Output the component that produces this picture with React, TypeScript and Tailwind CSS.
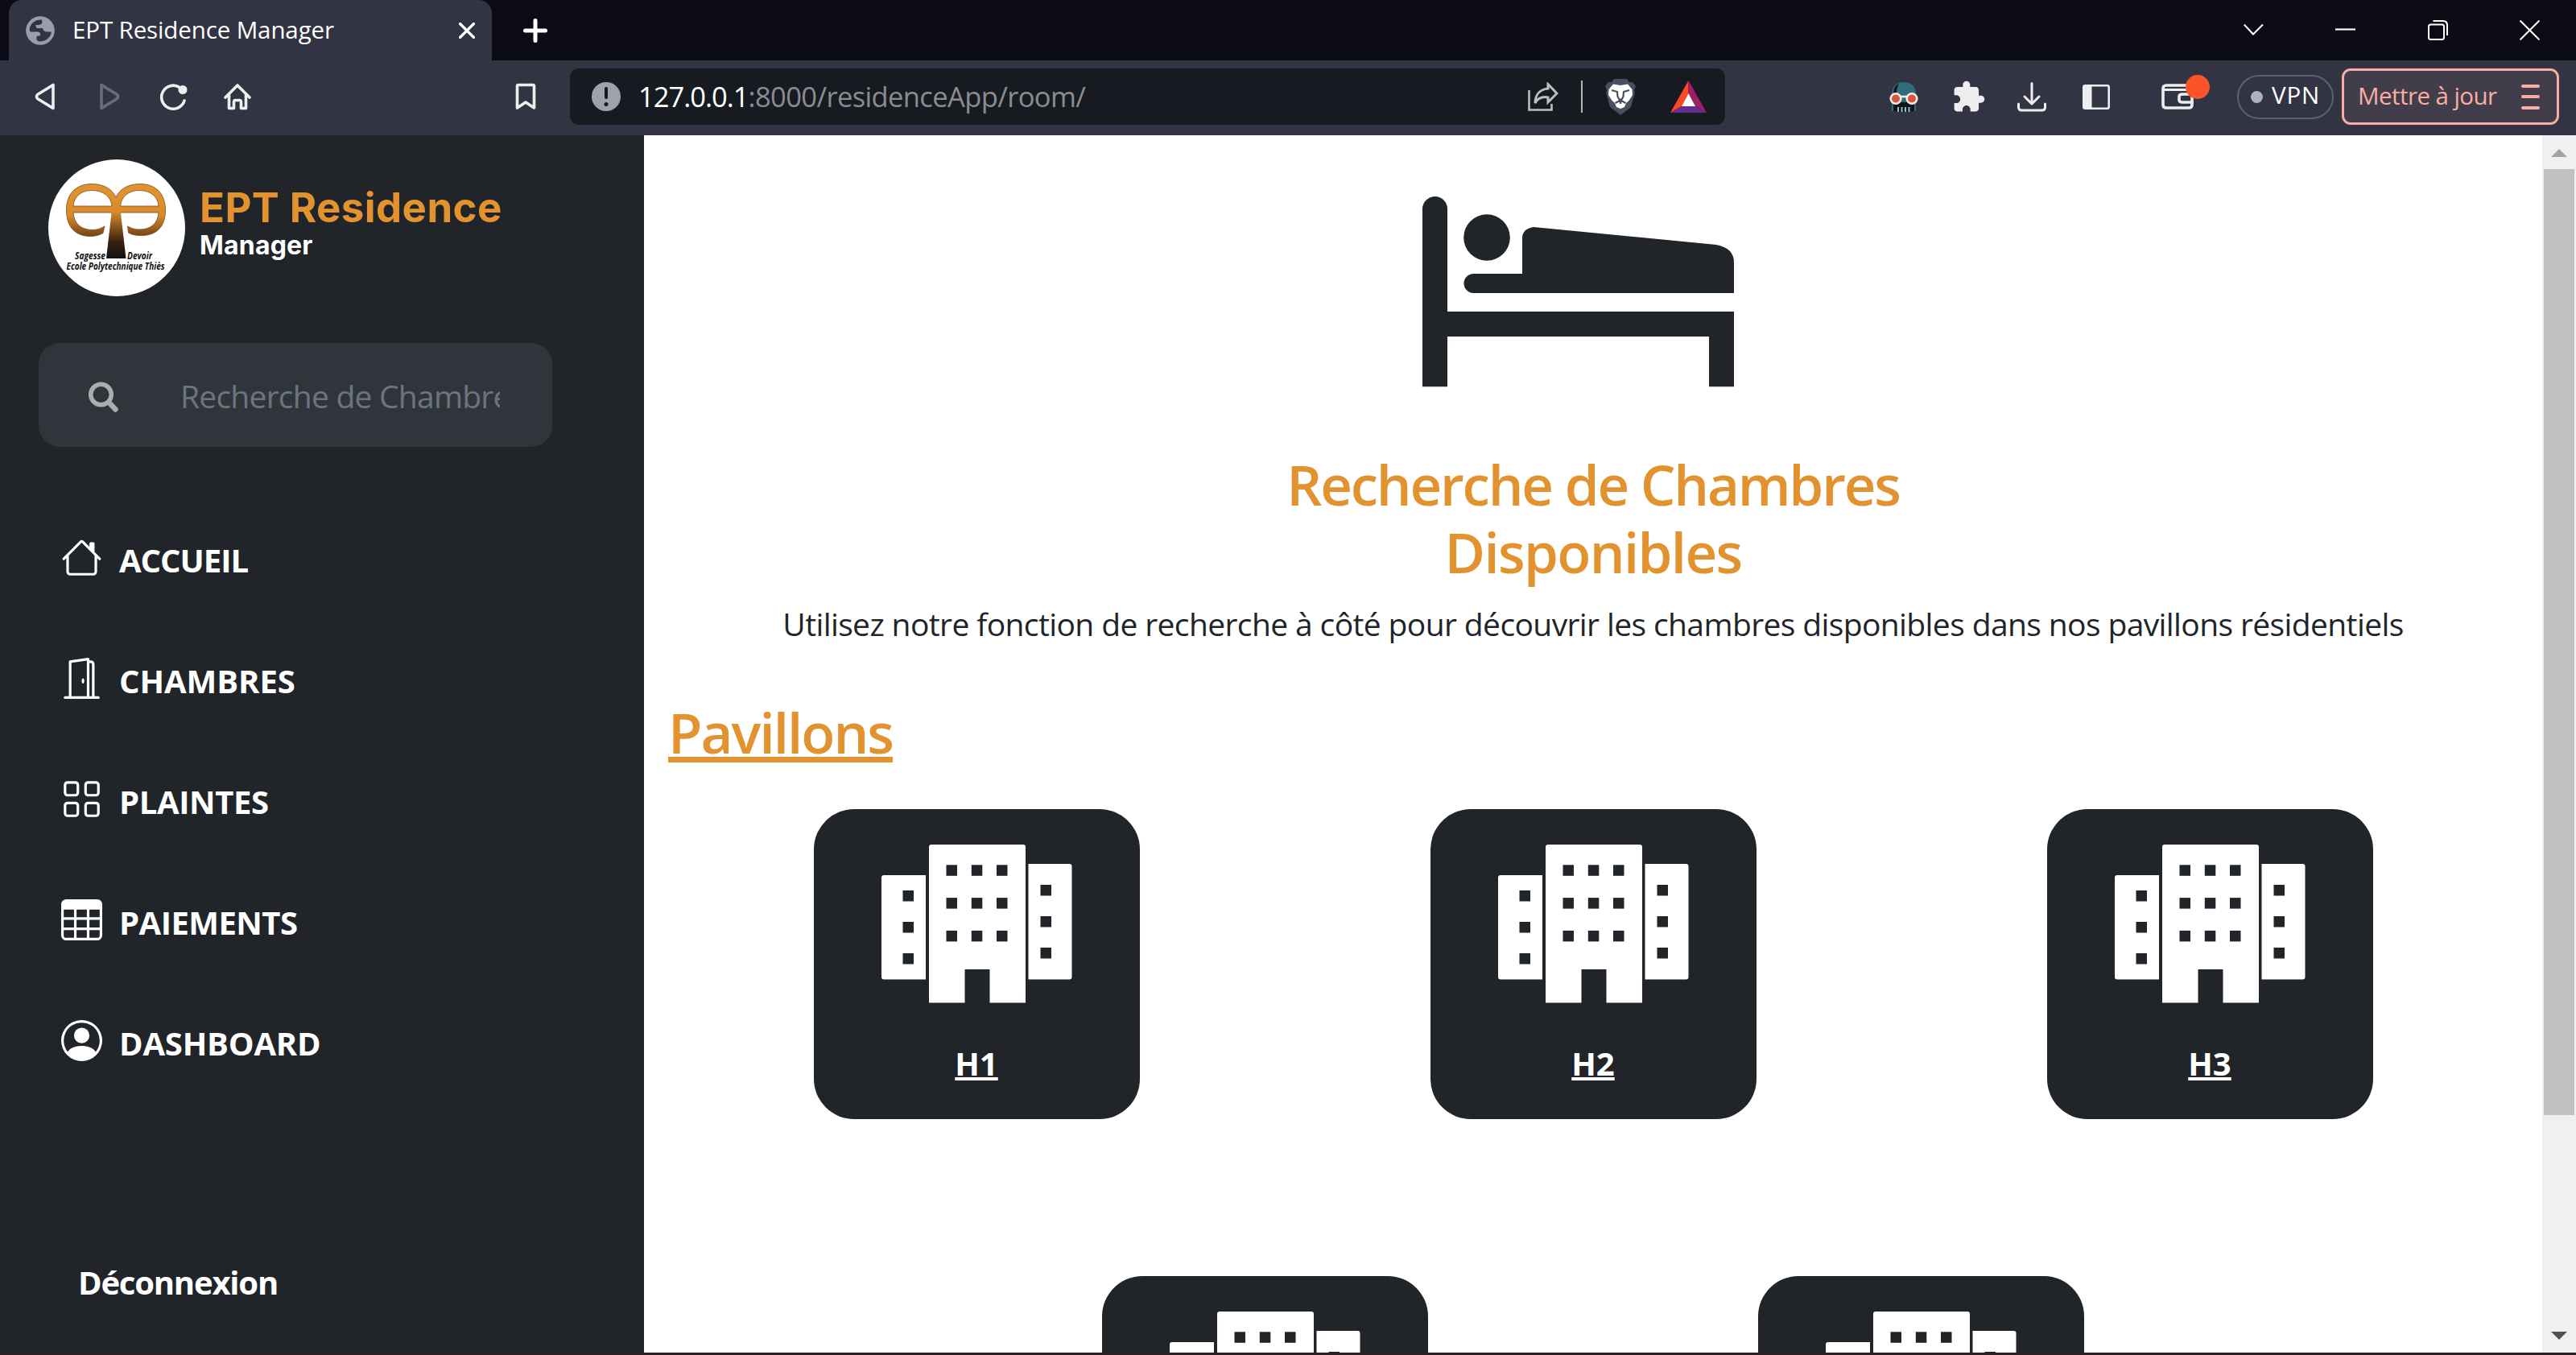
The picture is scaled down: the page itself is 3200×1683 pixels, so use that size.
import React from "react";
import { BsHouse, BsDoorOpen, BsGrid, BsTable, BsPersonCircle } from "react-icons/bs";
import { MdExtension } from "react-icons/md";

const navItems = [
  { label: "ACCUEIL", Icon: BsHouse, spacing: "tracking-[-1px]" },
  { label: "CHAMBRES", Icon: BsDoorOpen, spacing: "tracking-[-0.05px]" },
  { label: "PLAINTES", Icon: BsGrid, spacing: "tracking-[-0.38px]" },
  { label: "PAIEMENTS", Icon: BsTable, spacing: "tracking-[-0.52px]" },
  { label: "DASHBOARD", Icon: BsPersonCircle, spacing: "tracking-[-0.19px]" },
];

function GlobeIcon() {
  return (
    <svg viewBox="0 0 36 36" className="size-9 shrink-0">
      <circle cx="18" cy="18" r="17.8" fill="#9b9ea8" />
      <path d="M20 4.500C12 4 5.500 9 4.500 16.500L5.500 19.500H14.500C18 19.500 18.500 22 18 24.500H15C14 24.500 13.500 25 13.500 26V29.500C15 31.200 17 31.800 19 31.500C26 31 31.500 25.500 31.800 19.500H27C23 19.500 21.500 17.500 21 15H13.500V13.500H12.500V11H15.500C18.500 11 20.500 9.500 20.500 7.500Z" fill="#323443" />
      <path d="M18 20L21 20.500C22 23 20.500 26 18 26Z" fill="#323443" />
    </svg>
  );
}

function TabBar() {
  return (
    <div className="flex h-[75px] items-center bg-[#0b0b15] pl-[11px]">
      <div className="flex h-full w-[600px] items-center rounded-t-[16px] bg-[#323443] pl-[21px] pr-[21px]">
        <GlobeIcon />
        <span className="ml-[22px] flex-1 pb-0.5 text-[29.5px] leading-none tracking-[-0.12px] text-white">EPT Residence Manager</span>
        <svg viewBox="0 0 20 20" className="size-5" stroke="#fff" strokeWidth="3.2" strokeLinecap="round">
          <path d="M1.500 1.500L18.500 18.500M18.500 1.500L1.500 18.500" />
        </svg>
      </div>
      <svg viewBox="0 0 30 30" className="ml-[39px] size-[30px]" stroke="#fff" strokeWidth="5" strokeLinecap="round">
        <path d="M15 2.500V27.500M2.500 15H27.500" />
      </svg>
      <div className="ml-auto mr-[45px] flex items-center gap-[89.5px]">
        <svg viewBox="0 0 25 25" className="size-[25px]" fill="none" stroke="#fff" strokeWidth="2">
          <path d="M0.700 5.500L12 17.500L24 5.500" />
        </svg>
        <svg viewBox="0 0 25 25" className="size-[25px]" stroke="#fff" strokeWidth="2.200">
          <path d="M0 11.500H25" />
        </svg>
        <svg viewBox="0 0 25 25" className="size-[25px]" fill="none" stroke="#fff" strokeWidth="2">
          <rect x="1" y="5.500" width="19" height="18.500" rx="2.500" />
          <path d="M6.500 1.100H18.500C22 1.100 24 3 24 6.500V19" />
        </svg>
        <svg viewBox="0 0 25 25" className="size-[25px]" stroke="#fff" strokeWidth="2">
          <path d="M0.500 0.500L24.500 24.500M24.500 0.500L0.500 24.500" />
        </svg>
      </div>
    </div>
  );
}

function Toolbar() {
  return (
    <div className="flex h-[93px] items-center bg-[#323443] pb-[3px] pl-[43px]">
      <svg viewBox="0 0 26 34" className="h-[34px] w-[26px]" fill="none" stroke="#eeeeef" strokeWidth="3.600" strokeLinejoin="round">
        <path d="M23 2.500V31.500L3.500 19.500Q1.500 17 3.500 14.500Z" />
      </svg>
      <svg viewBox="0 0 26 34" className="ml-[54px] h-[34px] w-[26px]" fill="none" stroke="#6b6d79" strokeWidth="3.600" strokeLinejoin="round">
        <path d="M3 2.500V31.500L22.500 19.500Q24.500 17 22.500 14.500Z" />
      </svg>
      <svg viewBox="0 0 36 34" className="ml-[49px] h-[34px] w-9" fill="none" stroke="#eeeeef" strokeWidth="3.600" strokeLinecap="round">
        <path d="M25 5.500A14.500 14.500 0 1 0 31 22" />
        <circle cx="29" cy="8.500" r="5.500" fill="#eeeeef" stroke="none" />
      </svg>
      <svg viewBox="0 0 34 34" className="ml-[44px] size-[34px]" fill="none" stroke="#eeeeef" strokeWidth="3.600" strokeLinejoin="round" strokeLinecap="round">
        <path d="M2 18L17 3L32 18M6.500 15V31.500H12.500V24Q12.500 21.500 14.500 21.500H19.500Q21.500 21.500 21.500 24V31.500H27.500V15" />
      </svg>
      <svg viewBox="0 0 26 34" className="ml-[328px] h-[34px] w-[26px]" fill="none" stroke="#eeeeef" strokeWidth="3.600" strokeLinejoin="round">
        <path d="M2.500 4Q2.500 2.500 4 2.500H22Q23.500 2.500 23.500 4V31L13 24L2.500 31Z" />
      </svg>

      <div className="ml-[42px] flex h-[70px] w-[1435px] items-center rounded-[11px] bg-[#181a21] pl-[27px] pr-[23px]">
        <svg viewBox="0 0 36 36" className="size-9">
          <circle cx="18" cy="18" r="18" fill="#9fa2ac" />
          <path d="M18 8V19" stroke="#181a21" strokeWidth="4" strokeLinecap="round" />
          <circle cx="18" cy="27.500" r="2.500" fill="#181a21" />
        </svg>
        <div className="ml-[22px] flex-1 text-[34.5px] leading-none">
          <span className="tracking-[-1px] text-white">127.0.0.1</span>
          <span className="tracking-[-0.62px] text-[#8b8c90]">:8000/residenceApp/room/</span>
        </div>
        <svg viewBox="0 0 38 36" className="h-9 w-[38px]" fill="none" stroke="#bdbebf" strokeWidth="2.600">
          <path d="M1.500 10V34.500H29.500V27" />
          <path d="M25 2.500L36 14L25 25V19C17 17.500 12 20.500 9 26C9 15.500 15 9 25 8Z" strokeWidth="3" />
        </svg>
        <div className="ml-[28px] h-10 w-0.5 bg-[#b5b6b8]" />
        <svg viewBox="0 0 38 46" className="ml-[28px] h-[46px] w-[38px]">
          <path d="M11 1H27L30 5H34L38 10L36 15L37 18L32 36L19 46L6 36L1 18L2 15L0 10L4 5H8Z" fill="#4b4d60" />
          <path d="M10 7.500L19 9L28 7.500L33.500 14L34 21L29.500 28L26 31L24 36L19 38L14 36L12 31L8.500 28L4 21L4.500 14Z" fill="#fff" />
          <path d="M8 15L15 17L15.500 23L17.500 26.500H20.500L22.500 23L23 17L30 15M12.500 31L19 27.500L25.500 31M19 28V32" fill="none" stroke="#4b4d60" strokeWidth="2.200" />
        </svg>
        <svg viewBox="0 0 45 40" className="ml-[43px] h-10 w-[45px]">
          <path d="M22.500 0L0 40L14 32L22.500 16Z" fill="#ff4724" />
          <path d="M22.500 0V16L31 32L45 40Z" fill="#9e1f63" />
          <path d="M0 40L14 32H31L45 40Z" fill="#662d91" />
          <path d="M22.500 16L14 32H31Z" fill="#fff" />
        </svg>
      </div>

      <svg viewBox="0 0 38 38" className="ml-[203px] size-[38px]">
        <path d="M4 16C4 6 10 1 19 1S34 6 34 16V37H4Z" fill="#2f6d7b" />
        <path d="M6 17C6 9 8 5 13 3C10 8 10 12 10 17ZM6 26H32V37H29V32H9V37H6Z" fill="#12151c" />
        <rect x="9" y="30" width="20" height="8" fill="#12151c" />
        <path d="M12 32V38M16.500 32V38M21 32V38M25.500 32V38" stroke="#8cc5d2" strokeWidth="2" />
        <circle cx="9" cy="21.500" r="6.300" fill="#d4583f" stroke="#fbe9e4" strokeWidth="2.600" />
        <circle cx="29" cy="21.500" r="6.300" fill="#d4583f" stroke="#fbe9e4" strokeWidth="2.600" />
        <path d="M15 19H23" stroke="#fbe9e4" strokeWidth="2.600" />
      </svg>
      <MdExtension className="ml-[40px] size-[43px] text-[#eeeeef]" />
      <svg viewBox="0 0 38 38" className="ml-[38px] size-[38px]" fill="none" stroke="#eeeeef" strokeWidth="3" strokeLinecap="round" strokeLinejoin="round">
        <path d="M19 2.500V27M10 19L19 28L28 19M2.500 28V32Q2.500 36 6.500 36H31.500Q35.500 36 35.500 32V28" />
      </svg>
      <svg viewBox="0 0 34 31" className="ml-[44px] h-[31px] w-[34px]">
        <rect x="1.300" y="1.300" width="31.400" height="28.400" rx="2" fill="none" stroke="#eeeeef" strokeWidth="2.600" />
        <rect x="1" y="1" width="10.500" height="29" fill="#eeeeef" />
      </svg>
      <div className="relative ml-[64px]">
        <svg viewBox="0 0 40 34" className="h-[34px] w-10" fill="none" stroke="#eeeeef" strokeWidth="3.600" strokeLinejoin="round">
          <path d="M38 11V7Q38 3 34 3H6Q2 3 2 7V27Q2 31 6 31H34Q38 31 38 27V23" />
          <path d="M3 8.500H36" strokeWidth="3" />
          <path d="M38 14H26Q22 14 22 17V21Q22 24 26 24H38Z" />
        </svg>
        <span className="absolute -top-[10px] left-[30px] size-[30px] rounded-full bg-[#fb542b]" />
      </div>
      <div className="ml-[54px] flex h-[55px] w-[120px] items-center rounded-full border-[2.500px] border-[#5e6078] pl-[15px]">
        <span className="size-[15px] rounded-full bg-[#aeb1c2]" />
        <span className="ml-[11px] pb-1 text-[29.5px] leading-none tracking-[0.8px] text-white">VPN</span>
      </div>
      <div className="ml-2.5 flex h-[70px] w-[270px] items-center justify-between rounded-[11px] border-[3px] border-[#faada5] bg-[#423d4a] pl-[17px] pr-[21px]">
        <span className="whitespace-nowrap pb-[3px] text-[29.5px] leading-none tracking-[-0.56px] text-[#faada5]">Mettre à jour</span>
        <div className="flex w-[23px] flex-col gap-[9.5px]">
          <span className="h-1 rounded-sm bg-[#faada5]" />
          <span className="h-1 rounded-sm bg-[#faada5]" />
          <span className="h-1 rounded-sm bg-[#faada5]" />
        </div>
      </div>
    </div>
  );
}

function Logo() {
  return (
    <svg viewBox="0 0 170 170" className="size-[170px] shrink-0">
      <defs>
        <linearGradient id="loop" x1="0" y1="30" x2="0" y2="96" gradientUnits="userSpaceOnUse">
          <stop offset="0" stopColor="#e29330" />
          <stop offset="0.6" stopColor="#d98b2c" />
          <stop offset="0.85" stopColor="#9a5c1c" />
          <stop offset="1" stopColor="#6d431b" />
        </linearGradient>
        <linearGradient id="trunk" x1="0" y1="40" x2="0" y2="123" gradientUnits="userSpaceOnUse">
          <stop offset="0" stopColor="#e29330" />
          <stop offset="0.3" stopColor="#d98b2c" />
          <stop offset="0.75" stopColor="#3a2212" />
          <stop offset="1" stopColor="#111" />
        </linearGradient>
      </defs>
      <circle cx="85" cy="85" r="85" fill="#fff" />
      <g stroke="#7a4c1c" strokeWidth="0.800">
        <path fillRule="evenodd" fill="url(#loop)" d="M84 47C79 36 68 30.500 54 30.500C34 30.500 22.500 43 22.500 63C22.500 84 34 95.500 52 95.500C58 95.500 64 94 68 91.500L70 83C65 86 60 87.500 55 87.500C41 87.500 32 80 31 66H79L80 80H88L89.500 66H137C136 80 127 87 113 87C107 87 103 85.500 98.500 83L99.500 91C104 94 110 94.500 116 94.500C134 94.500 145.500 84 145.500 63C145.500 43 134 30.500 114 30.500C100 30.500 89 36 84 47ZM31 58C32 46 41 38.500 54 38.500C68 38.500 78 46 79 58ZM89.500 58C90.500 46 100 38.500 113 38.500C127 38.500 136 46 137 58Z" />
      </g>
      <path d="M79.500 58H89L96.500 123H72Z" fill="url(#trunk)" />
      <g fontFamily="Open Sans, sans-serif" fontStyle="italic" fontWeight="700" fontSize="11.500" fill="#111">
        <text x="33" y="123.500" textLength="38" lengthAdjust="spacingAndGlyphs">Sagesse</text>
        <text x="98" y="123.500" textLength="31" lengthAdjust="spacingAndGlyphs">Devoir</text>
        <text x="22.500" y="136.500" textLength="122" lengthAdjust="spacingAndGlyphs">Ecole Polytechnique Thiès</text>
      </g>
    </svg>
  );
}

function Sidebar() {
  return (
    <aside className="flex h-full w-[800px] shrink-0 flex-col bg-[#212529] pt-[30px] text-white">
      <div className="flex items-start pl-[60px] font-['Inter',sans-serif]">
        <Logo />
        <div className="pl-[18px] pt-[38px] font-bold">
          <div className="text-[51px] leading-[44px] tracking-[0.41px] text-[#e29330]">EPT Residence</div>
          <div className="mt-[7px] text-[32px] leading-[36px] tracking-[0.2px]">Manager</div>
        </div>
      </div>

      <div className="ml-12 mt-[58px] flex h-[129px] w-[638px] items-center rounded-[26px] bg-[#30353b] pl-[62px]">
        <svg viewBox="0 0 37 38" className="mt-[5px] h-[38px] w-[37px]" fill="none" stroke="#adadad">
          <circle cx="15.500" cy="16" r="12.800" strokeWidth="5.500" />
          <path d="M25.500 26L33.500 34.500" strokeWidth="6.500" strokeLinecap="round" />
        </svg>
        <div className="ml-[77px] w-[397px] overflow-hidden whitespace-nowrap pt-[3px] text-[39px] leading-[60px] tracking-[-0.76px] text-[#6c757d]">
          Recherche de Chambres
        </div>
      </div>

      <nav className="mt-[110px] flex flex-col gap-[90px] pl-[76px]">
        {navItems.map(({ label, Icon, spacing }) => (
          <a key={label} className="flex h-[60px] items-center">
            <Icon className="mb-[6px] size-[51px]" />
            <span className={`ml-[21px] pt-px text-[40px] font-bold leading-[60px] ${spacing}`}>{label}</span>
          </a>
        ))}
      </nav>

      <a className="ml-[97px] mt-[238px] text-[40px] font-bold leading-[60px] tracking-[-1.2px]">Déconnexion</a>
    </aside>
  );
}

function BedIcon() {
  return (
    <svg viewBox="0 0 387 237" className="h-[237px] w-[387px]" fill="#212529">
      <path d="M0 15.500A15.500 15.500 0 0 1 31 15.500V143H387V236.300H356V174H31V236.300H0Z" />
      <circle cx="80" cy="51" r="28.800" />
      <path d="M124 96V52Q124 40 138 38L365 60Q387 64 387 82V120H63.500A11.500 11.500 0 0 1 63.500 96Z" />
    </svg>
  );
}

function BuildingIcon() {
  const rows = [0, 1, 2];
  return (
    <svg viewBox="0 0 237 197" className="h-[197px] w-[237px]">
      <g fill="#fff">
        <path d="M3 38H55V167.500H3Q0 167.500 0 164.500V41Q0 38 3 38Z" />
        <path d="M62 0H176Q179 0 179 3V196.500H134.500V155H103.500V196.500H59V3Q59 0 62 0Z" />
        <path d="M182.500 24H233.500Q236.500 24 236.500 27V164.500Q236.500 167.500 233.500 167.500H182.500Z" />
      </g>
      <g fill="#212529">
        {rows.map((r) => (
          <g key={r}>
            <rect x="26.500" y={57 + r * 39} width="13.500" height="13.500" />
            <rect x="80.500" y={25.3 + r * 40.8} width="13.500" height="13.500" />
            <rect x="111.800" y={25.3 + r * 40.8} width="13.500" height="13.500" />
            <rect x="143" y={25.3 + r * 40.8} width="13.500" height="13.500" />
            <rect x="197.500" y={50 + r * 39} width="13.500" height="13.500" />
          </g>
        ))}
      </g>
    </svg>
  );
}

function PavilionCard({ name }: { name: string }) {
  return (
    <a className="flex h-[385px] w-[405px] flex-col items-center rounded-[50px] bg-[#212529] pt-11 text-white">
      <BuildingIcon />
      <span className="mt-[45px] text-[40px] font-bold leading-[60px] underline decoration-4 underline-offset-[2px]">{name}</span>
    </a>
  );
}

function Main() {
  return (
    <main className="h-full flex-1 overflow-hidden bg-white px-[30px] pt-[76px] text-[#212529]">
      <div className="flex justify-center pr-[38px]">
        <BedIcon />
      </div>
      <h1 className="mx-auto mt-[78px] w-[900px] text-center text-[69px] font-semibold leading-[84px] text-[#e29330]">
        <span className="block tracking-[-2.19px]">Recherche de Chambres</span>
        <span className="block tracking-[-1.65px]">Disponibles</span>
      </h1>
      <p className="mt-[18px] whitespace-nowrap text-center text-[39px] leading-[60px] tracking-[-0.61px]">
        Utilisez notre fonction de recherche à côté pour découvrir les chambres disponibles dans nos pavillons résidentiels
      </p>
      <h2 className="mt-[62px] text-[69px] font-semibold leading-[84px] tracking-[-1.95px] text-[#e29330] underline decoration-[7px] underline-offset-[4px]">
        Pavillons
      </h2>
      <div className="mt-[54px] grid grid-cols-3 justify-items-center">
        <PavilionCard name="H1" />
        <PavilionCard name="H2" />
        <PavilionCard name="H3" />
      </div>
      <div className="mt-[195px] flex justify-center gap-[410px]">
        <PavilionCard name="H4" />
        <PavilionCard name="H5" />
      </div>
    </main>
  );
}

function Scrollbar() {
  return (
    <div className="flex h-full w-[42px] shrink-0 flex-col items-center bg-[#f0f0f0] pt-[17px]">
      <svg viewBox="0 0 20 10" className="h-2.5 w-5" fill="#a3a3a3">
        <path d="M0 10L10 0L20 10Z" />
      </svg>
      <div className="mt-[15px] h-[1175px] w-[38px] bg-[#c1c1c1]" />
      <svg viewBox="0 0 20 10" className="mb-4 mt-auto h-2.5 w-5" fill="#505050">
        <path d="M0 0L10 10L20 0Z" />
      </svg>
    </div>
  );
}

export default function App() {
  return (
    <div className="flex h-[1683px] w-[3200px] flex-col overflow-hidden bg-[#2a2024] font-['Open_Sans',sans-serif]">
      <TabBar />
      <Toolbar />
      <div className="flex h-[1512px] overflow-hidden">
        <Sidebar />
        <Main />
        <Scrollbar />
      </div>
    </div>
  );
}
